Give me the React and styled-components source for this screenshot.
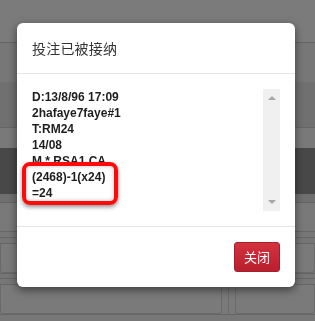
import React from "react";
import styled, { createGlobalStyle } from "styled-components";

const Global = createGlobalStyle`
  html, body { margin: 0; padding: 0; }
  body {
    width: 315px; height: 321px; overflow: hidden;
    font-family: "Liberation Sans", Arial, "Noto Sans CJK SC", sans-serif;
    background: #7a7a7a;
  }
`;

const Page = styled.div`
  width: 315px;
  height: 321px;
  display: flex;
  flex-direction: column;
  background: #7a7a7a;
`;

const Band = styled.div`
  height: ${(p) => p.$h}px;
  background: ${(p) => p.$bg || "#7a7a7a"};
  border-bottom: ${(p) => (p.$line ? "1px solid #666" : "none")};
  flex-shrink: 0;
`;

const PanelRow = styled.div`
  display: flex;
  height: 29px;
  border-bottom: 1px solid #656565;
  flex-shrink: 0;
`;

const Panel = styled.div`
  flex: ${(p) => (p.$grow ? 1 : "0 0 auto")};
  width: ${(p) => (p.$w ? `${p.$w}px` : "auto")};
  border: 1px solid #6a6a6a;
  border-top: none;
  border-radius: 0 0 3px 3px;
`;

const Divider = styled.div`
  width: 1px;
  margin: 0 6px;
  background: #6a6a6a;
`;

const Backdrop = styled.div`
  position: fixed;
  inset: 0;
`;

const Modal = styled.div`
  position: absolute;
  left: 17px;
  top: 23px;
  width: 278px;
  height: 264px;
  background: #fff;
  border-radius: 6px;
  box-shadow: 0 3px 9px rgba(0, 0, 0, 0.5);
  display: flex;
  flex-direction: column;
`;

const Header = styled.div`
  padding: 15px;
  border-bottom: 1px solid #e5e5e5;
`;

const Title = styled.h4`
  margin: 0;
  font-family: "Noto Sans CJK SC", sans-serif;
  font-size: 14px;
  font-weight: 400;
  line-height: 20px;
  color: #333;
  letter-spacing: 0.2px;
`;

const Body = styled.div`
  padding: 15px;
  border-bottom: 1px solid #e5e5e5;
  position: relative;
`;

const TextBox = styled.div`
  height: 122px;
  display: flex;
`;

const TextContent = styled.div`
  flex: 1;
  overflow: hidden;
  font-family: "Liberation Sans", Arial, sans-serif;
  font-weight: 700;
  font-size: 12px;
  line-height: 16px;
  color: #1e1e1e;
  white-space: pre;
`;

const ScrollBar = styled.div`
  width: 17px;
  background: #f0f0f0;
  display: flex;
  flex-direction: column;
  justify-content: space-between;
  align-items: center;
  padding: 7px 0 7px;
  box-sizing: border-box;
`;

const Arrow = styled.div`
  width: 0;
  height: 0;
  border-left: 4px solid transparent;
  border-right: 4px solid transparent;
  ${(p) =>
    p.$down
      ? "border-top: 4px solid #a6a6a6;"
      : "border-bottom: 4px solid #a6a6a6;"}
`;

const Highlight = styled.div`
  position: absolute;
  left: 5px;
  top: 88px;
  width: 96px;
  height: 43px;
  box-sizing: border-box;
  border: 4px solid #ff0a0a;
  border-radius: 8px;
  box-shadow: 0 2px 4px rgba(0, 0, 0, 0.45), inset 0 0 4px rgba(0, 0, 0, 0.25);
`;

const Footer = styled.div`
  padding: 15px;
  display: flex;
  justify-content: flex-end;
`;

const Button = styled.button`
  width: 46px;
  height: 30px;
  padding: 0;
  border: 1px solid #a81d2a;
  border-radius: 3px;
  background: linear-gradient(#d4323f, #b91f2e);
  color: #fff;
  font-family: "Noto Sans CJK SC", sans-serif;
  font-size: 13px;
  line-height: 28px;
  cursor: pointer;
`;

const lines = [
  "D:13/8/96 17:09",
  "2hafaye7faye#1",
  "T:RM24",
  "14/08",
  "M * RSA1 CA",
  "(2468)-1(x24)",
  "=24",
];

export default function App() {
  return (
    <>
      <Global />
      <Page>
        <Band $h={42} $bg="#7b7b7b" $line />
        <Band $h={39} $bg="#777777" />
        <Band $h={45} $bg="#707070" $line />
        <Band $h={20} $bg="#797979" />
        <Band $h={46} $bg="#484848" />
        <Band $h={8} $bg="#6f6f6f" $line />
        <Band $h={28} $bg="#797979" $line />
        <Band $h={5} $bg="#767676" $line />
        <Band $h={5} $bg="#767676" $line />
        <PanelRow>
          <Panel $grow />
          <Divider />
          <Panel $w={78} />
        </PanelRow>
        <Band $h={4} $bg="#767676" $line />
        <Band $h={5} $bg="#767676" $line />
        <PanelRow>
          <Panel $grow />
          <Divider />
          <Panel $w={78} />
        </PanelRow>
        <Band $h={8} $bg="#777777" />
      </Page>
      <Backdrop>
        <Modal>
          <Header>
            <Title>投注已被接纳</Title>
          </Header>
          <Body>
            <TextBox>
              <TextContent>{lines.join("\n")}</TextContent>
              <ScrollBar>
                <Arrow />
                <Arrow $down />
              </ScrollBar>
            </TextBox>
            <Highlight />
          </Body>
          <Footer>
            <Button>关闭</Button>
          </Footer>
        </Modal>
      </Backdrop>
    </>
  );
}
